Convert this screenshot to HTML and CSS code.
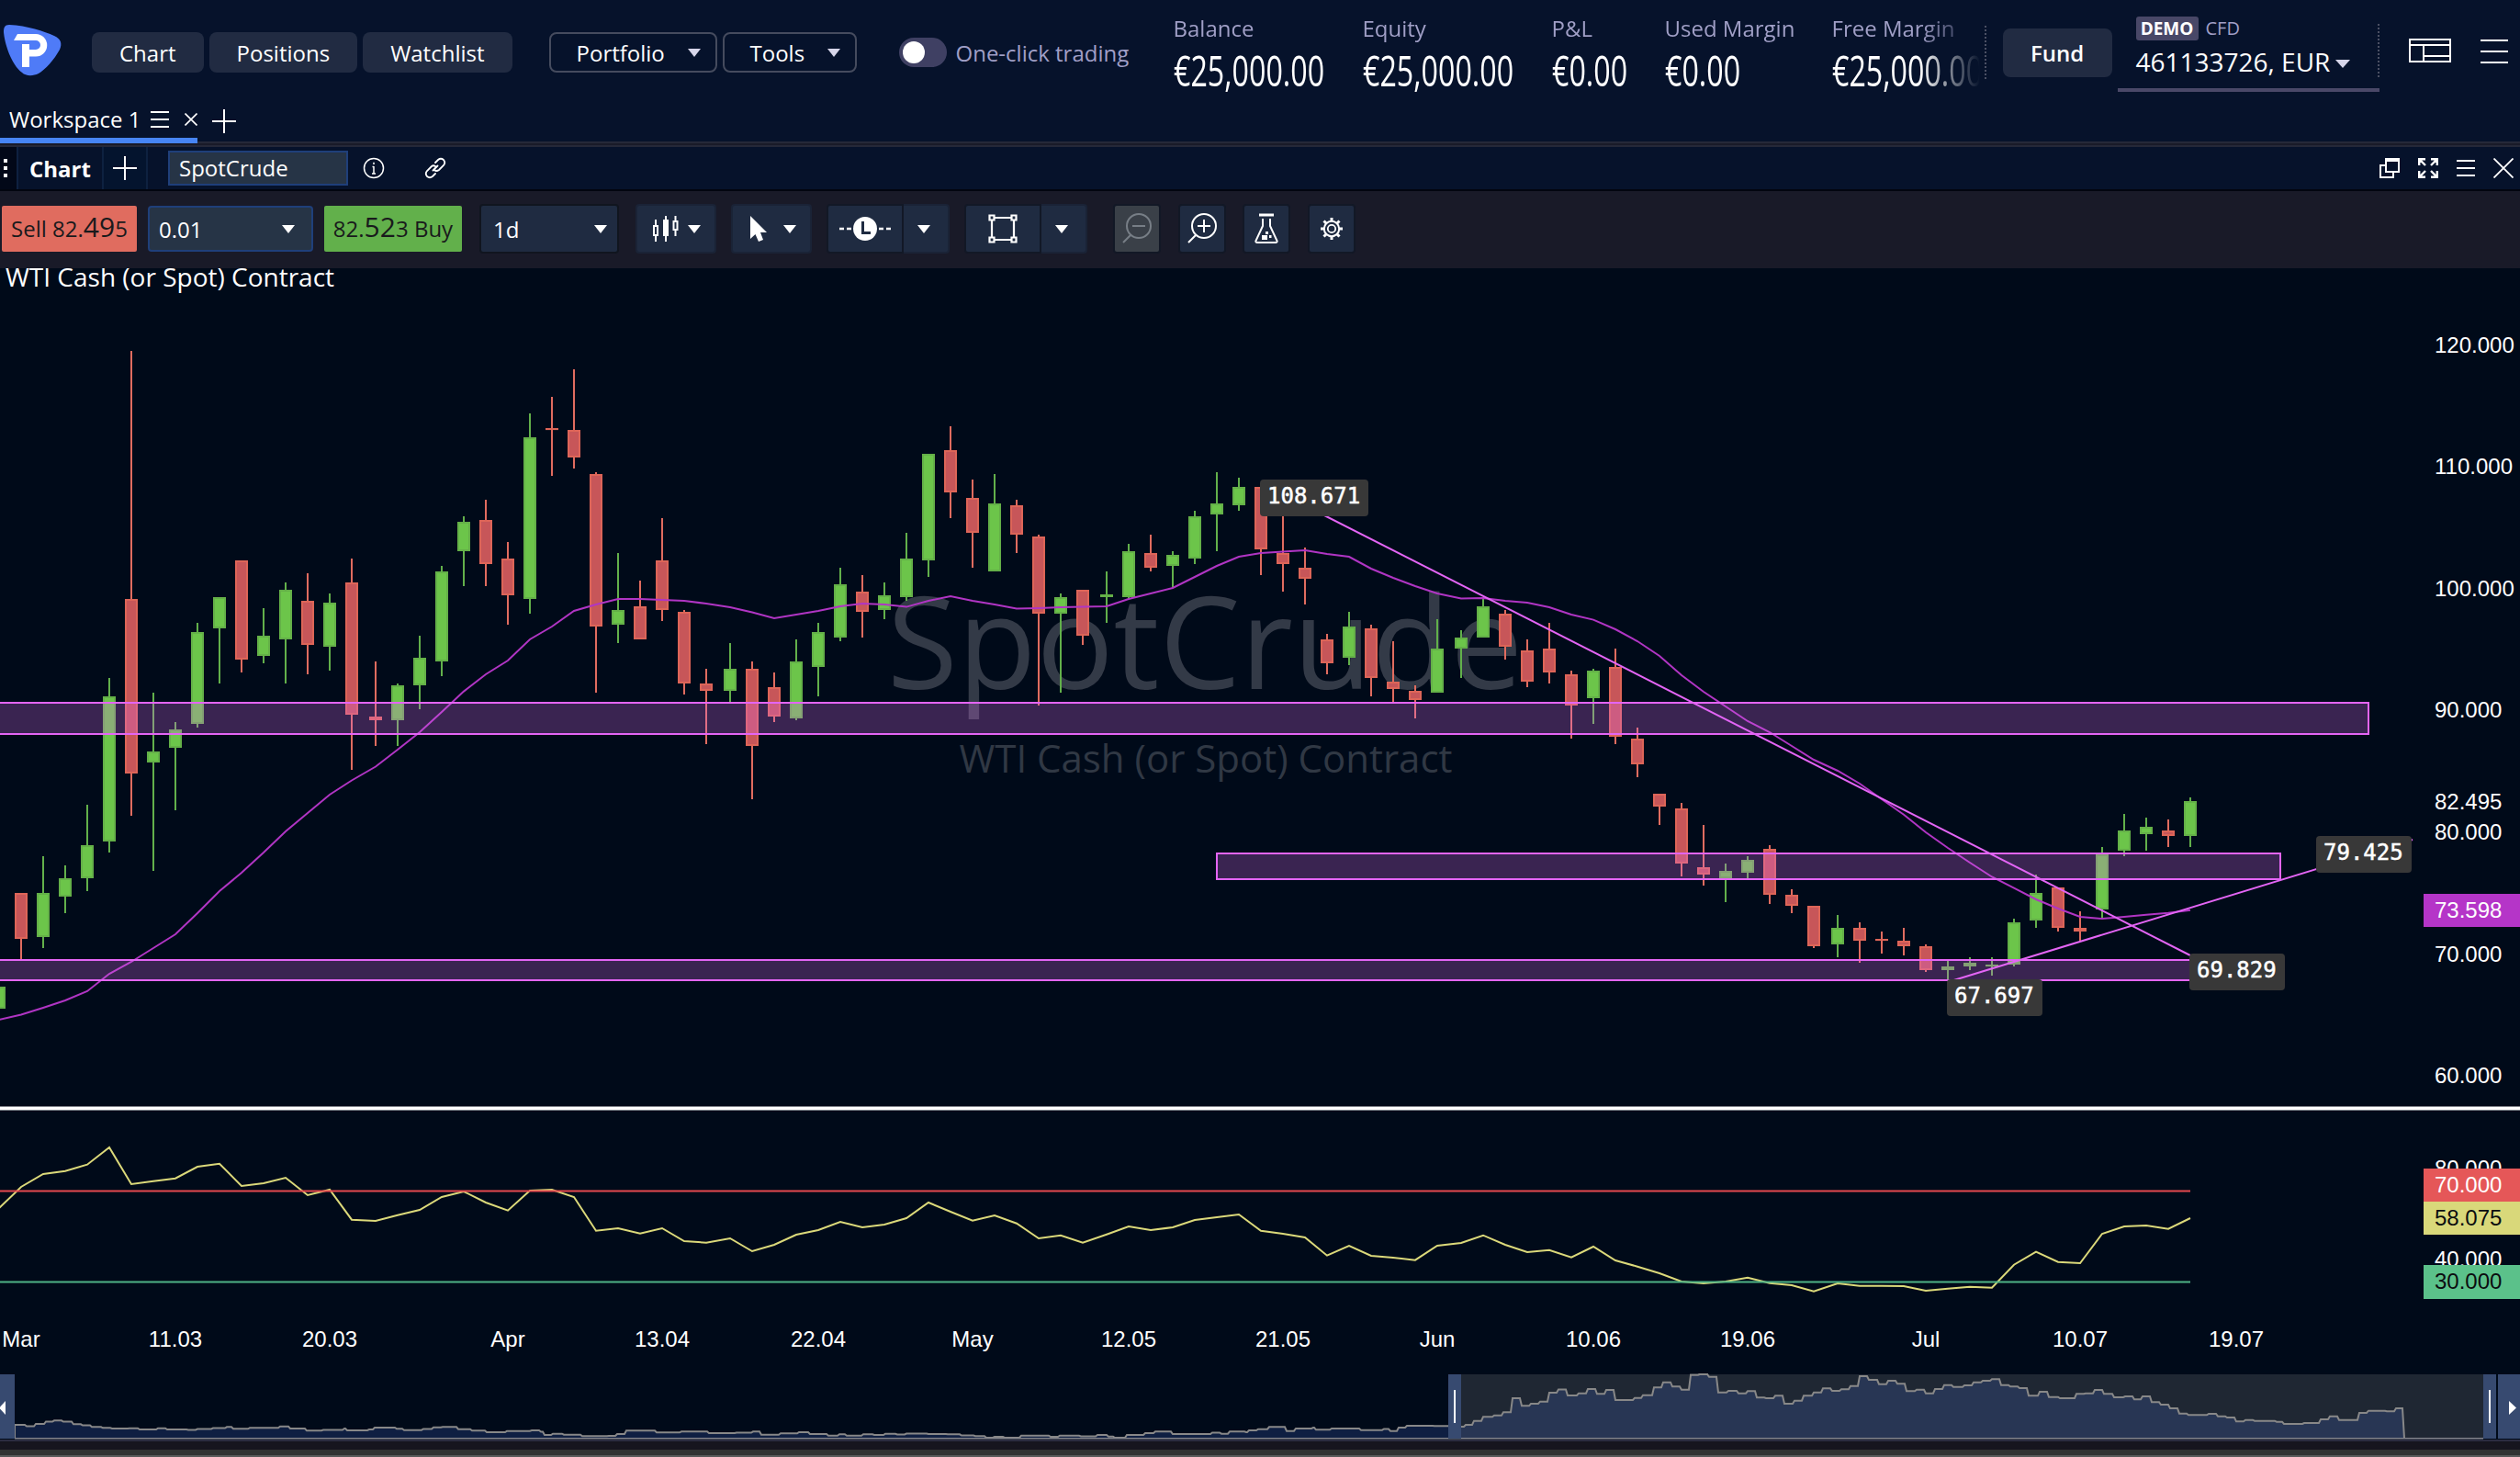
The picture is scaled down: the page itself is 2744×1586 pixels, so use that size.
FILE: index.html
```html
<!DOCTYPE html>
<html lang="en">
<head>
    <meta charset="UTF-8">
    <meta name="viewport" content="width=device-width, initial-scale=1.0">
    <title>SpotCrude - Workspace 1</title>
    <link rel="stylesheet" href="styles.css">
</head>
<body>
    <header class="topbar">
        <svg class="logo" width="64" height="56" viewBox="0 0 64 56">
            <path fill="#4f7bf7" d="M6 0 C26 1 44 7 55 12 C62 15 64 20 61 27 C55 38 45 49 38 53 C32 56 24 56 20 52 C8 43 1 20 0 8 C0 3 1 0 6 0 Z"/>
            <path fill="#fff" d="M15 10 H35 a12.2 12.2 0 0 1 0 24.5 H28 V46 H20 V21 H28 V27 H35 a5 5 0 0 0 0 -10 H11 Z"/>
        </svg>
        <nav class="main-nav">
            <button class="nav-btn">Chart</button>
            <button class="nav-btn">Positions</button>
            <button class="nav-btn">Watchlist</button>
        </nav>
        <div class="menus">
            <button class="menu-btn portfolio">Portfolio<i class="caret"></i></button>
            <button class="menu-btn tools">Tools<i class="caret"></i></button>
        </div>
        <div class="one-click"><span class="switch"></span>One-click trading</div>
        <div class="account-stats">
            <div class="stat">Balance<b>€25,000.00</b></div>
            <div class="stat">Equity<b>€25,000.00</b></div>
            <div class="stat">P&amp;L<b>€0.00</b></div>
            <div class="stat">Used Margin<b>€0.00</b></div>
            <div class="stat">Free Margin<b>€25,000.00</b></div>
        </div>
        <button class="fund">Fund</button>
        <div class="account">
            <div class="account-type"><span class="demo">DEMO</span>CFD</div>
            <div class="account-id">461133726, EUR<i class="caret"></i></div>
        </div>
        <svg class="layout-icon" width="46" height="28" viewBox="0 0 46 28" fill="none" stroke="#fff" stroke-width="2">
            <path d="M1 2 H45 V26 H1 Z M1 8 H45 M16 8 V26 M16 20 H45"/>
        </svg>
        <svg width="30" height="28" viewBox="0 0 30 28" stroke="#fff" stroke-width="2"><path d="M0 3 H30 M0 15 H30 M0 27 H30"/></svg>
    </header>

    <div class="workspace-bar">
        <div class="workspace-tab">
            <span>Workspace 1</span>
            <svg width="20" height="20" viewBox="0 0 20 20" stroke="#fff" stroke-width="2"><path d="M0 2 H20 M0 10 H20 M0 18 H20"/></svg>
            <svg class="close" width="14" height="14" viewBox="0 0 14 14" stroke="#fff" stroke-width="1.6"><path d="M0.5 0.5 L13.5 13.5 M13.5 0.5 L0.5 13.5"/></svg>
        </div>
        <svg class="add-workspace" width="26" height="26" viewBox="0 0 26 26" stroke="#fff" stroke-width="2"><path d="M13 0 V26 M0 13 H26"/></svg>
    </div>

    <div class="widget-bar">
        <div class="grip"><i></i><i></i><i></i></div>
        <div class="widget-tab">Chart</div>
        <div class="widget-add"><svg width="26" height="26" viewBox="0 0 26 26" stroke="#fff" stroke-width="2"><path d="M13 0 V26 M0 13 H26"/></svg></div>
        <div class="symbol">SpotCrude</div>
        <svg class="info" width="24" height="24" viewBox="0 0 24 24" fill="none" stroke="#fff" stroke-width="1.5">
            <circle cx="12" cy="12" r="10.5"/><path d="M12 10 V18 M10.5 10.5 H12 M10 18 H14 M12 5.8 V8"/>
        </svg>
        <svg class="link" width="24" height="24" viewBox="0 0 24 24" fill="none" stroke="#fff" stroke-width="1.800" stroke-linecap="round">
            <path d="M12 6 L15 3 Q18 0.5 21 3 Q23.5 6 21 9 L16 14 Q13 16 11 14 M12 18 L9 21 Q6 23.5 3 21 Q0.5 18 3 15 L8 10 Q10 8.500 12 10 M9.500 14.500 L14.500 9.500"/>
        </svg>
        <div class="window-tools">
            <svg width="22" height="22" viewBox="0 0 22 22" fill="none" stroke="#fff" stroke-width="2"><path d="M7 2 H21 V15 H7 Z M7 8 H1 V21 H15 V15"/><path stroke-width="4" d="M6 2 H22"/></svg>
            <svg width="22" height="22" viewBox="0 0 22 22" fill="none" stroke="#fff" stroke-width="2.400"><path d="M1.200 8 V1.200 H8 M1.200 1.200 L8 8 M14 1.200 H20.800 V8 M20.800 1.200 L14 8 M1.200 14 V20.800 H8 M1.200 20.800 L8 14 M14 20.800 H20.800 V14 M20.800 20.800 L14 14"/></svg>
            <svg width="20" height="22" viewBox="0 0 20 22" stroke="#fff" stroke-width="2"><path d="M0 3 H20 M0 11 H20 M0 19 H20"/></svg>
            <svg width="22" height="22" viewBox="0 0 22 22" stroke="#fff" stroke-width="1.800"><path d="M0.500 0.500 L21.500 21.500 M21.500 0.500 L0.500 21.500"/></svg>
        </div>
    </div>

    <div class="toolbar">
        <button class="sell">Sell 82.<big>49</big>5</button>
        <div class="lots">0.01<i class="caret"></i></div>
        <button class="buy">82.<big>52</big>3 Buy</button>
        <div class="period">1d<i class="caret"></i></div>
        <button class="tool wide candles-tool">
            <svg width="30" height="30" viewBox="0 0 30 30" fill="none" stroke="#fff" stroke-width="2"><path d="M4 5 V11 M4 23 V29 M2 12 H6 V22 H2 Z M15 1 V29 M25.500 1 V7 M25.500 17 V23 M23.500 7 H27.500 V16 H23.500 Z"/><path fill="#fff" d="M13 6 H17 V22 H13 Z"/></svg>
            <i class="caret"></i>
        </button>
        <button class="tool wide cursor-tool">
            <svg width="20" height="30" viewBox="0 0 20 30" fill="#fff"><path d="M1 1 L19 19 H12 L15 27 L10 29 L6.500 21 L1 26 Z"/></svg>
            <i class="caret"></i>
        </button>
        <div class="split">
            <button class="tool split-main">
                <svg width="56" height="28" viewBox="0 0 56 28" fill="none" stroke="#fff" stroke-width="2.400"><path d="M0 14 H5 M8 14 H13 M43 14 H48 M51 14 H56"/><circle cx="28" cy="14" r="13" fill="#fff" stroke="none"/><path stroke="#1f2b41" stroke-width="3" d="M25.500 6 V18.500 H34"/></svg>
            </button>
            <button class="tool split-caret"><i class="caret"></i></button>
        </div>
        <div class="split">
            <button class="tool split-main">
                <svg width="32" height="32" viewBox="0 0 32 32" fill="none" stroke="#fff" stroke-width="2.200"><path d="M7 4 H25 M7 28 H25 M4 7 V25 M28 7 V25"/><path d="M1.500 1.500 H6.500 V6.500 H1.500 Z M25.500 1.500 H30.500 V6.500 H25.500 Z M1.500 25.500 H6.500 V30.500 H1.500 Z M25.500 25.500 H30.500 V30.500 H25.500 Z"/></svg>
            </button>
            <button class="tool split-caret"><i class="caret"></i></button>
        </div>
        <button class="tool square first disabled">
            <svg width="32" height="34" viewBox="0 0 32 34" fill="none" stroke="#777e86" stroke-width="2"><circle cx="18" cy="14" r="13"/><path d="M9 24 L1 32 M11 14 H25"/></svg>
        </button>
        <button class="tool square">
            <svg width="32" height="34" viewBox="0 0 32 34" fill="none" stroke="#fff" stroke-width="2"><circle cx="18" cy="14" r="13"/><path d="M9 24 L1 32 M11 14 H25 M18 7 V21"/></svg>
        </button>
        <button class="tool square">
            <svg width="26" height="34" viewBox="0 0 26 34" fill="none" stroke="#fff" stroke-width="2"><path d="M5 2 H21" stroke-width="3"/><path d="M9 6 V14 L1.500 30 Q1 32 3 32 H23 Q25 32 24.500 30 L17 14 V6"/><path fill="#fff" stroke="none" d="M8 24 H14 V29 H8 Z M12 20 H15 V23 H12 Z M16 24 H18.500 V27 H16 Z"/></svg>
        </button>
        <button class="tool square">
            <svg width="26" height="26" viewBox="0 0 26 26" fill="none" stroke="#fff"><circle cx="13" cy="13" r="8.200" stroke-width="2"/><circle cx="13" cy="13" r="4.200" stroke-width="1.800"/><path stroke-width="3" d="M13 1 V5 M13 21 V25 M1 13 H5 M21 13 H25 M4.500 4.500 L7.300 7.300 M18.700 18.700 L21.500 21.500 M4.500 21.500 L7.300 18.700 M18.700 7.300 L21.500 4.500"/></svg>
        </button>
    </div>

    <svg id="chart" class="chart" width="2744" height="1275" viewBox="0 292 2744 1275"></svg>
    <div class="bottom-edge"></div>

    <script src="chart.js"></script>
</body>
</html>
```
FILE: styles.css
```css
* {
    box-sizing: border-box;
}
body {
    margin: 0;
    width: 2744px;
    height: 1586px;
    overflow: hidden;
    background-color: #000a19;
    color: #fff;
    font-family: "Open Sans", "Noto Sans", sans-serif;
    font-size: 24px;
}
button {
    font: inherit;
    color: inherit;
    border: none;
    padding: 0;
    background: none;
}
svg {
    display: block;
    flex: none;
}
.caret {
    display: inline-block;
    border: 7px solid transparent;
    border-top: 9px solid #fff;
    border-bottom: 0;
}

/* Top bar */
.topbar {
    display: flex;
    align-items: flex-start;
    height: 104px;
    background-color: #06122b;
}
.topbar > * {
    flex: none;
}
.logo {
    margin: 27px 32px 0 4px;
}
.main-nav,
.menus {
    display: flex;
    gap: 6px;
    margin-top: 35px;
}
.nav-btn {
    height: 44px;
    padding: 0 30px;
    border-radius: 8px;
    background-color: #212b42;
}
.menus {
    margin-left: 40px;
}
.menu-btn {
    display: flex;
    align-items: center;
    justify-content: space-between;
    height: 44px;
    padding: 0 16px 0 28px;
    border: 2px solid #454b5e;
    border-radius: 8px;
}
.menu-btn .caret {
    border-top-color: #d7d6ea;
}
.portfolio {
    width: 183px;
}
.tools {
    width: 146px;
}
.one-click {
    display: flex;
    align-items: center;
    gap: 10px;
    width: 252px;
    margin: 35px 0 0 46px;
    height: 44px;
    color: #a09fc6;
    white-space: nowrap;
}
.switch {
    width: 52px;
    height: 32px;
    padding: 4px;
    border-radius: 16px;
    background-color: #3f4063;
}
.switch::before {
    content: "";
    display: block;
    width: 24px;
    height: 24px;
    border-radius: 50%;
    background-color: #fff;
}
.account-stats {
    display: grid;
    grid-template-columns: 206px 206px 123px 182px 168px;
    width: 885px;
    height: 104px;
    margin-left: 47px;
    padding-top: 15px;
    overflow: hidden;
    color: #a09fc6;
    -webkit-mask-image: linear-gradient(to right, #000 812px, transparent 878px);
    mask-image: linear-gradient(to right, #000 812px, transparent 878px);
}
.stat {
    line-height: 32px;
    white-space: nowrap;
}
.stat b {
    display: block;
    width: 0;
    font-weight: 400;
    font-size: 46px;
    line-height: 58px;
    color: #fff;
    transform: scaleX(0.7);
    transform-origin: left;
}
.fund {
    width: 119px;
    height: 53px;
    margin: 31px 6px 0 18px;
    border-radius: 8px;
    background-color: #212b42;
    font-weight: 600;
    position: relative;
}
/* dotted separators */
.fund::before,
.account::after {
    content: "";
    position: absolute;
    left: -20px;
    top: -3px;
    height: 58px;
    border-left: 2px dotted #4b5064;
}
.account::after {
    left: auto;
    right: 0;
    top: 26px;
}
.account {
    position: relative;
    width: 285px;
    height: 100px;
    padding: 18px 0 0 20px;
    border-bottom: 4px solid #4a4868;
}
.account-type {
    display: flex;
    align-items: center;
    gap: 8px;
    height: 26px;
    line-height: 24px;
    font-size: 20px;
    color: #a09fc6;
}
.demo {
    width: 68px;
    height: 26px;
    line-height: 26px;
    border-radius: 3px;
    text-align: center;
    background-color: #484767;
    color: #fff;
    font-weight: 700;
    font-size: 19px;
}
.account-id {
    font-size: 28px;
    line-height: 38px;
    margin-top: 4px;
    white-space: nowrap;
}
.account-id .caret {
    margin: 0 0 4px 6px;
    border-width: 9px 8px 0;
    border-top-color: #d7d6ea;
}
.layout-icon {
    margin: 0 32px 0 32px;
}
.topbar > svg:not(.logo) {
    margin-top: 41px;
}

/* Workspace tabs */
.workspace-bar {
    display: flex;
    height: 56px;
    background: linear-gradient(#252838 2px, #191a28 2px, #191a28 4px, #252838 4px) bottom / 100% 6px no-repeat #06122b;
}
.workspace-tab {
    display: flex;
    align-items: center;
    width: 215px;
    height: 52px;
    padding-top: 5px;
    padding-left: 10px;
    border-bottom: 6px solid #4785f5;
    white-space: nowrap;
}
.workspace-tab span {
    width: 154px;
}
.workspace-tab .close {
    margin-left: 17px;
}
.add-workspace {
    margin: 15px 0 0 16px;
}

/* Widget header */
.widget-bar {
    display: flex;
    align-items: center;
    height: 48px;
    border-bottom: 2px solid #02050f;
    background-color: #06122b;
}
.grip {
    display: flex;
    flex-direction: column;
    justify-content: center;
    gap: 4px;
    width: 20px;
    height: 46px;
    padding-left: 4px;
    border-right: 2px solid #0e2140;
    background-color: #020818;
}
.grip i {
    width: 4px;
    height: 4px;
    background-color: #fff;
}
.widget-tab,
.widget-add {
    display: flex;
    align-items: center;
    justify-content: center;
    width: 93px;
    height: 46px;
    border-right: 2px solid #0e2140;
    font-weight: 700;
}
.widget-add {
    width: 48px;
    background-color: #04142e;
}
.symbol {
    width: 196px;
    height: 38px;
    margin-left: 22px;
    padding-left: 10px;
    line-height: 34px;
    border: 2px solid #1f3f7a;
    background-color: #263446;
}
.info {
    margin-left: 16px;
}
.link {
    margin-left: 43px;
}
.window-tools {
    display: flex;
    gap: 20px;
    margin-left: auto;
    margin-right: 7px;
}

/* Chart toolbar */
.toolbar {
    display: flex;
    align-items: center;
    height: 84px;
    padding: 0 0 2px 2px;
    background-color: #191a28;
}
.sell,
.buy {
    width: 147px;
    height: 50px;
    line-height: 48px;
    border-radius: 2px;
    background-color: #e06c5f;
    color: #191a1c;
    white-space: nowrap;
}
.buy {
    width: 150px;
    margin-left: 12px;
    background-color: #62b04b;
}
big {
    font-size: 30px;
    line-height: 30px;
}
.lots,
.period {
    display: flex;
    align-items: center;
    justify-content: space-between;
    width: 180px;
    height: 50px;
    margin-left: 12px;
    padding: 0 18px 0 10px;
    border: 2px solid #1f3f7a;
    border-radius: 4px;
    background-color: #263446;
}
.period {
    width: 152px;
    height: 54px;
    margin-left: 19px;
    padding: 0 11px 0 13px;
    border-color: #10151f;
    background-color: #1f2b41;
}
.tool {
    display: flex;
    align-items: center;
    justify-content: center;
    height: 54px;
    border: 2px solid #121826;
    border-radius: 4px;
    background-color: #1f2b41;
}
.wide {
    width: 88px;
    gap: 9px;
    margin-left: 16px;
    border-color: #1a2336;
}
.candles-tool {
    margin-left: 18px;
}
.cursor-tool {
    gap: 17px;
    padding-left: 2px;
}
.split {
    display: flex;
    margin-left: 16px;
}
.split-main {
    width: 84px;
    border-radius: 4px 0 0 4px;
}
.split-caret {
    width: 50px;
    padding-right: 4px;
    border-left: 0;
    border-radius: 0 4px 4px 0;
    border-color: #1a2336;
}
.square {
    width: 52px;
    margin-left: 18.5px;
}
.square.first {
    margin-left: 28px;
}
.disabled {
    background-color: #3a4048;
}

/* Chart */
.axis {
    font: 24px "Liberation Sans", Arial, sans-serif;
    fill: #fff;
}
.tag {
    font: 24px "DejaVu Sans Mono", monospace;
    fill: #fff;
    stroke: #fff;
    stroke-width: 0.5px;
}
.middle {
    text-anchor: middle;
}
.dark {
    fill: #0b0d10;
}
.title {
    font-size: 28px;
    fill: #fff;
}
.watermark {
    font-size: 140px;
    fill: #333a47;
}
.watermark-sub {
    font-size: 42px;
    fill: #303844;
}
.up {
    fill: #6cc54a;
    stroke: #64b048;
    stroke-width: 2px;
}
.down {
    fill: #c75659;
    stroke: #dd6558;
    stroke-width: 2px;
}
.wick-up {
    fill: #62b04b;
}
.wick-down {
    fill: #e06c5f;
}
.zone {
    fill: #e070f5;
    fill-opacity: 0.26;
    stroke: #e365f5;
    stroke-width: 2px;
}
.trend {
    stroke: #e365f5;
    stroke-width: 2px;
}
.line {
    fill: none;
    stroke-width: 2px;
}
.bottom-edge {
    height: 19px;
    background: linear-gradient(#2b2c40 2px, #16151e 2px, #16151e 11px, #333 11px, #333 17px, #5a5a5a 17px);
}
```
FILE: chart.js
```javascript
const chart = document.getElementById("chart");

// [x, high, body top, body bottom, low, direction]
const candles = [
    [-1, 1074, 1074, 1098, 1098, 1], [23, 972, 972, 1022, 1044, 0], [47, 932, 972, 1020, 1032, 1],
    [71, 942, 956, 976, 994, 1], [95, 876, 920, 956, 970, 1], [119, 738, 758, 916, 928, 1],
    [143, 382, 652, 842, 888, 0], [167, 754, 818, 830, 948, 1], [191, 786, 794, 814, 882, 1],
    [215, 678, 688, 788, 792, 1], [239, 650, 650, 684, 744, 1], [263, 610, 610, 718, 732, 0],
    [287, 662, 692, 714, 722, 1], [311, 634, 642, 696, 744, 1], [335, 624, 654, 702, 734, 0],
    [359, 646, 656, 704, 730, 1], [383, 608, 634, 778, 838, 0], [409, 720, 780, 784, 812, 0],
    [433, 744, 746, 784, 812, 1], [457, 692, 716, 746, 772, 1], [481, 616, 622, 720, 736, 1],
    [505, 562, 568, 600, 638, 1], [529, 544, 566, 614, 638, 0], [553, 590, 608, 648, 680, 0],
    [577, 450, 476, 652, 668, 1], [601, 432, 466, 468, 518, 0], [625, 402, 468, 498, 510, 0],
    [649, 514, 516, 682, 754, 0], [673, 602, 664, 680, 700, 1], [697, 632, 660, 696, 696, 0],
    [721, 564, 610, 664, 676, 0], [745, 664, 666, 744, 756, 0], [769, 728, 744, 752, 810, 0],
    [795, 700, 728, 752, 764, 1], [819, 720, 728, 812, 870, 0], [843, 732, 748, 780, 786, 0],
    [867, 696, 720, 782, 784, 1], [891, 678, 688, 726, 758, 1], [915, 618, 636, 694, 698, 1],
    [939, 626, 644, 666, 694, 0], [963, 634, 648, 664, 674, 1], [987, 580, 608, 650, 654, 1],
    [1011, 494, 494, 610, 628, 1], [1035, 464, 490, 536, 564, 0], [1059, 522, 542, 580, 618, 0],
    [1083, 516, 548, 622, 622, 1], [1107, 544, 550, 582, 602, 0], [1131, 582, 584, 668, 768, 0],
    [1155, 646, 650, 668, 754, 1], [1179, 642, 642, 692, 702, 0], [1205, 622, 647, 650, 678, 1],
    [1229, 592, 600, 650, 652, 1], [1253, 582, 602, 618, 622, 0], [1277, 600, 604, 616, 640, 1],
    [1301, 556, 562, 608, 614, 1], [1325, 514, 548, 560, 600, 1], [1349, 520, 530, 550, 556, 1],
    [1373, 530, 530, 598, 626, 0], [1397, 540, 602, 614, 644, 0], [1421, 596, 618, 630, 658, 0],
    [1445, 690, 696, 722, 734, 0], [1469, 666, 682, 716, 724, 1], [1493, 680, 684, 738, 758, 0],
    [1517, 698, 742, 750, 764, 0], [1541, 746, 752, 762, 782, 0], [1565, 674, 706, 754, 754, 1],
    [1591, 686, 694, 706, 738, 1], [1615, 650, 660, 694, 694, 1], [1639, 664, 668, 704, 718, 0],
    [1663, 696, 708, 742, 748, 0], [1687, 678, 706, 732, 744, 0], [1711, 730, 734, 768, 804, 0],
    [1735, 728, 730, 760, 788, 1], [1759, 706, 726, 802, 810, 0], [1783, 792, 804, 832, 846, 0],
    [1807, 864, 864, 878, 898, 0], [1831, 874, 880, 940, 954, 0], [1855, 898, 944, 952, 964, 0],
    [1879, 940, 948, 956, 982, 1], [1903, 932, 936, 950, 956, 1], [1927, 920, 924, 974, 984, 0],
    [1951, 968, 974, 986, 994, 0], [1975, 986, 986, 1030, 1032, 0], [2001, 996, 1010, 1028, 1042, 1],
    [2025, 1004, 1010, 1024, 1048, 0], [2049, 1014, 1022, 1024, 1038, 0], [2073, 1010, 1024, 1030, 1040, 0],
    [2097, 1028, 1030, 1056, 1058, 0], [2121, 1046, 1052, 1056, 1067, 1], [2145, 1042, 1048, 1052, 1056, 1],
    [2169, 1042, 1050, 1052, 1062, 1], [2193, 1000, 1004, 1050, 1052, 1], [2217, 952, 972, 1002, 1010, 1],
    [2241, 966, 966, 1010, 1014, 0], [2265, 992, 1010, 1014, 1024, 0], [2289, 922, 930, 990, 1000, 1],
    [2313, 886, 904, 926, 932, 1], [2337, 890, 900, 908, 926, 1], [2361, 892, 904, 910, 922, 0],
    [2385, 868, 872, 910, 922, 1]
];

// moving average and RSI, one value per candle
const average = [
    1110, 1104.5, 1097, 1089, 1079, 1060, 1047, 1032, 1017, 994, 970, 950, 928, 905, 885, 865, 849.5, 834.5, 816, 797,
    775, 752.6, 734, 719, 696, 682, 665, 658, 652, 652, 653, 654, 657, 661, 666.5, 673, 669, 665, 660, 657,
    658, 660.6, 654, 649, 654, 658, 662.6, 662, 661, 660.6, 660, 652, 646, 640, 628, 616, 606, 602, 600.5, 599,
    603, 606, 619, 629, 638, 646, 651.5, 651, 654, 656, 661, 669, 674.6, 685, 698, 714, 735, 753, 769, 785,
    797, 812, 827, 839, 853, 870, 886.7, 906, 923, 939, 954.5, 966.7, 979, 989, 998, 1000, 998, 995.7, 993.7, 990.7
];
const rsi = [
    1315, 1292, 1278, 1274.7, 1267.7, 1249, 1289, 1285.7, 1282.7, 1270, 1266.7, 1291, 1288, 1282, 1301, 1295, 1327.7, 1329, 1322.7, 1317,
    1303, 1297, 1309, 1317.7, 1296, 1295, 1303, 1339.7, 1337, 1342.7, 1337, 1351, 1352.7, 1348, 1362, 1355, 1344, 1339, 1330, 1336,
    1333, 1326, 1309, 1319, 1328.7, 1323, 1331.7, 1348, 1344.7, 1352.7, 1343.7, 1335, 1339, 1336, 1328, 1325, 1322, 1339.7, 1343, 1347,
    1366.7, 1356, 1367, 1369, 1371.7, 1356, 1353, 1344.7, 1355, 1363, 1360.7, 1368.7, 1357, 1372, 1378.7, 1386, 1395, 1397, 1395, 1390.7,
    1396.7, 1399, 1405.7, 1397, 1399.7, 1399.7, 1400, 1405, 1402.7, 1400.7, 1401.7, 1376.7, 1362.7, 1373.7, 1375, 1343, 1335, 1334, 1337.7, 1326
];

// navigator history
const history = [
    [16, 1551], [27, 1552.5], [37, 1550], [48, 1547.5], [57, 1546.3], [67, 1547.5], [78, 1550.3], [88, 1551.5], [98, 1553.3],
    [110, 1554.3], [120, 1555], [139, 1554.7], [150, 1556], [170, 1554.7], [180, 1556], [203, 1556.5], [213, 1555.5],
    [230, 1554.5], [245, 1553.3], [252, 1555.3], [270, 1554.3], [303, 1552.7], [314, 1555], [332, 1557.3], [350, 1556.5],
    [373, 1555], [376, 1557], [400, 1556], [406, 1554], [430, 1555.3], [438, 1556.7], [459, 1555.5], [470, 1553.7],
    [480, 1553.3], [497, 1555.7], [512, 1557.3], [528, 1559], [550, 1557.7], [577, 1557], [587, 1558.5], [591, 1562],
    [600, 1560.7], [612, 1561.7], [632, 1563.3], [661, 1563], [670, 1561], [680, 1557.3], [713, 1559.3], [740, 1558.3],
    [770, 1560], [800, 1559.5], [818, 1558.3], [827, 1561.7], [848, 1560.3], [868, 1559], [880, 1561], [900, 1562.7],
    [912, 1561.3], [920, 1562.7], [938, 1561.3], [950, 1562], [962, 1560.7], [975, 1561.5], [985, 1560.5], [1009, 1561],
    [1030, 1561.3], [1045, 1562.5], [1060, 1563.3], [1072, 1565], [1081, 1564], [1092, 1565], [1110, 1562.7], [1142, 1564],
    [1152, 1562.7], [1175, 1563.5], [1193, 1562], [1205, 1563.7], [1212, 1565], [1225, 1562], [1245, 1560], [1256, 1558.3],
    [1275, 1561], [1318, 1559.5], [1328, 1560.7], [1337, 1558.3], [1355, 1559], [1358, 1557], [1368, 1555.7], [1380, 1553.3],
    [1399, 1557.7], [1409, 1555], [1428, 1554], [1431, 1556.3], [1448, 1555], [1480, 1556.7], [1505, 1555.5], [1512, 1557.7],
    [1521, 1554], [1530, 1552], [1560, 1552.3], [1577, 1553], [1594, 1551], [1603, 1546.7], [1613, 1542.3], [1625, 1540.7],
    [1635, 1537.3], [1645, 1522], [1655, 1530.3], [1665, 1528], [1675, 1525.7], [1685, 1516], [1695, 1512.5], [1705, 1519],
    [1717, 1516.7], [1727, 1512], [1737, 1517.3], [1747, 1513], [1757, 1524], [1778, 1521.7], [1787, 1518.7], [1799, 1510.3],
    [1809, 1504.7], [1819, 1509.3], [1829, 1512.7], [1839, 1496.7], [1849, 1496], [1859, 1498.7], [1869, 1515.7], [1880, 1514],
    [1891, 1516.7], [1901, 1514.3], [1911, 1521.3], [1921, 1522], [1931, 1519.3], [1941, 1528], [1952, 1524.7], [1962, 1519.3],
    [1973, 1515.7], [1983, 1511.3], [1993, 1514], [2003, 1512.3], [2013, 1508.7], [2023, 1498], [2033, 1502], [2044, 1506.7],
    [2054, 1503], [2064, 1506.3], [2074, 1514.3], [2085, 1512.7], [2095, 1516.7], [2105, 1512], [2115, 1507.7], [2125, 1509.7],
    [2137, 1508], [2147, 1504.7], [2157, 1503], [2167, 1501.3], [2177, 1507.7], [2187, 1509.3], [2197, 1511], [2207, 1519.3],
    [2219, 1515], [2229, 1520.7], [2241, 1522], [2259, 1517.3], [2269, 1516.7], [2279, 1513], [2289, 1517.3], [2300, 1521],
    [2312, 1520], [2322, 1523.3], [2331, 1520], [2341, 1526.3], [2351, 1529], [2361, 1533], [2371, 1538.7], [2381, 1540.3],
    [2403, 1539], [2413, 1541.7], [2423, 1543], [2433, 1547.3], [2443, 1545.7], [2453, 1546.7], [2477, 1547.7], [2485, 1550],
    [2507, 1549], [2525, 1545], [2535, 1541.7], [2545, 1545.7], [2567, 1538], [2577, 1535.7], [2597, 1536.3], [2607, 1533],
    [2616, 1565.5]
];

function text(x, y, value, className) {
    return `<text x="${x}" y="${y}" class="${className}">${value}</text>`;
}

function rect(x, y, w, h, attrs) {
    return `<rect x="${x}" y="${y}" width="${w}" height="${h}" ${attrs}/>`;
}

function drawSeries(values, color) {
    const points = values.map((y, i) => `${candles[i][0]},${y}`).join(" ");
    return `<polyline class="line" points="${points}" stroke="${color}"/>`;
}

function drawCandle([x, high, top, bottom, low, up]) {
    const dir = up ? "up" : "down";
    return rect(x - 1, high, 2, low - high, `class="wick-${dir}"`) +
        rect(x - 6, top + 1, 12, Math.max(bottom - top - 2, 0.1), `class="${dir}"`);
}

function drawTag(x, y, w, value) {
    return rect(x, y, w, 40, 'rx="4" fill="#383838"') + text(x + 8, y + 26, value, "tag");
}

function drawAxisBox(y, h, color, value, className) {
    return rect(2639, y, 105, h, `fill="${color}"`) + text(2651, y + 26, value, "axis " + className);
}

function drawHistory() {
    let path = `M16 1565.5 V${history[0][1]}`;
    for (const [x, y] of history.slice(1)) {
        path += ` H${x} L${x + 2} ${y}`;
    }
    return `<path d="${path}" fill="#0f1f42" stroke="#888" stroke-width="2"/>` +
        rect(1591, 1496, 1113, 70, 'fill="#1f2733"') +
        `<clipPath id="selected">${rect(1591, 1490, 1113, 80, "")}</clipPath>` +
        `<path d="${path}" fill="#283654" stroke="#888" stroke-width="2" clip-path="url(#selected)"/>` +
        rect(16, 1565, 2688, 1.5, 'fill="#85868e"');
}

let out = "";
out += text(6, 312, "WTI Cash (or Spot) Contract", "title");
out += text(1312, 750, "SpotCrude", "watermark middle");
out += text(1313, 841, "WTI Cash (or Spot) Contract", "watermark-sub middle");
out += candles.map(drawCandle).join("");
out += drawSeries(average, "#b035c4");

// support and resistance zones
out += rect(-5, 765, 2584, 34, 'class="zone"');
out += rect(1325, 929, 1158, 28, 'class="zone"');
out += rect(-5, 1045, 2390, 22, 'class="zone"');
out += '<path class="trend" d="M1373 526 L2385 1040 M2121 1069 L2627 914"/>';
out += drawTag(1372, 522, 118, "108.671");
out += drawTag(2120, 1066, 104, "67.697");
out += drawTag(2384, 1038, 104, "69.829");
out += drawTag(2522, 910, 104, "79.425");

// price axis
[["120.000", 384], ["110.000", 516], ["100.000", 649], ["90.000", 781], ["82.495", 881], ["80.000", 914], ["70.000", 1047], ["60.000", 1179]]
    .forEach(([label, y]) => out += text(2651, y, label, "axis"));
out += drawAxisBox(973, 36, "#b535c8", "73.598", "");

// RSI
out += rect(0, 1204.5, 2744, 4, 'fill="#fff"');
out += drawSeries(rsi, "#dbd97a");
out += '<path class="line" stroke="#e5484f" d="M0 1296.5 H2385"/>';
out += '<path class="line" stroke="#4fb386" d="M0 1395.5 H2385"/>';
out += text(2651, 1280, "80.000", "axis") + text(2651, 1379, "40.000", "axis");
out += drawAxisBox(1272, 36, "#e55758", "70.000", "");
out += drawAxisBox(1308, 36, "#d9d87a", "58.075", "dark");
out += drawAxisBox(1377, 37, "#5bc18a", "30.000", "dark");

// dates
[["Mar", 23], ["11.03", 191], ["20.03", 359], ["Apr", 553], ["13.04", 721], ["22.04", 891], ["May", 1059], ["12.05", 1229],
 ["21.05", 1397], ["Jun", 1565], ["10.06", 1735], ["19.06", 1903], ["Jul", 2097], ["10.07", 2265], ["19.07", 2435]]
    .forEach(([label, x]) => out += text(x, 1466, label, "axis middle"));

// navigator
out += drawHistory();
out += rect(0, 1496, 16, 70, 'fill="#374a70"') + '<path fill="#fff" d="M6 1525 V1540 L-1 1532.500 Z"/>';
out += rect(1577, 1496, 14, 70, 'fill="#374a70"') + rect(1583, 1513, 2, 36, 'fill="#fff"');
out += rect(2704, 1496, 14, 70, 'fill="#374a70"') + rect(2710, 1513, 2, 36, 'fill="#fff"');
out += rect(2720, 1496, 24, 70, 'fill="#374a70"') + '<path fill="#fff" d="M2732 1525 V1540 L2740 1532.500 Z"/>';

chart.innerHTML = out;
```
